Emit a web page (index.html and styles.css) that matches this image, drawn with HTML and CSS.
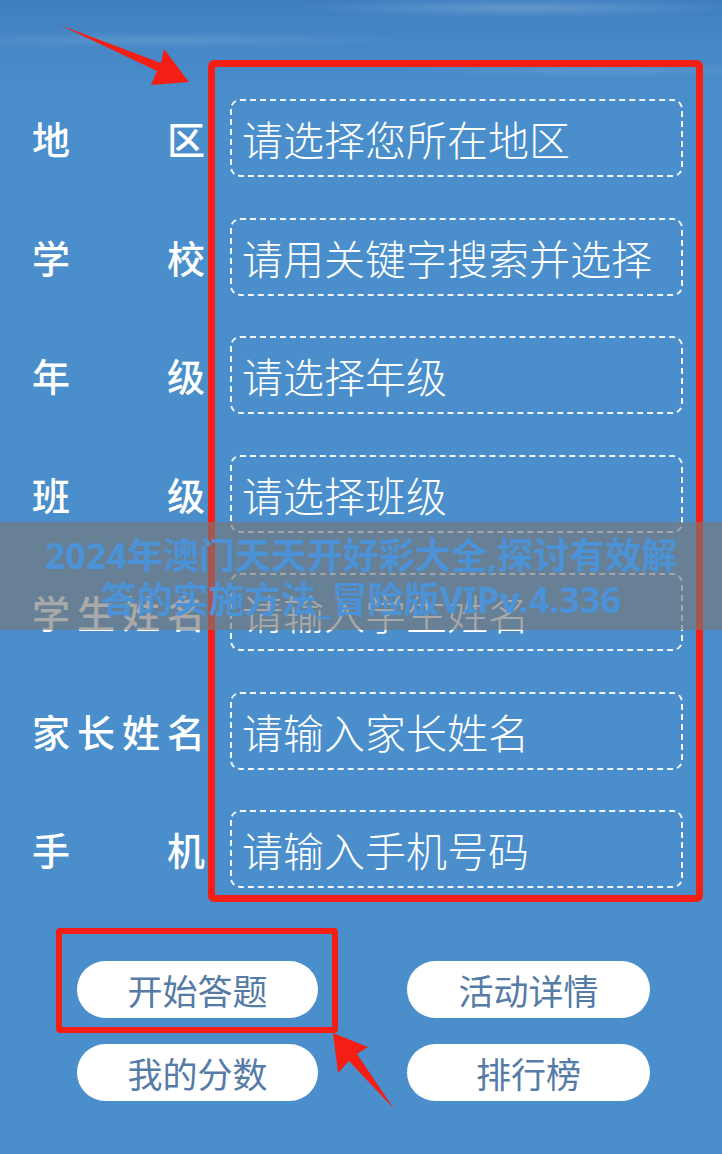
FILE: index.html
```html
<!DOCTYPE html>
<html lang="zh-CN">
  <head>
    <meta charset="UTF-8" />
    <meta name="viewport" content="width=device-width, initial-scale=1.0" />
    <title>报名答题</title>
    <link rel="stylesheet" href="styles.css">
  </head>
  <body>
    <div class="page">
      <div class="form">
        <div class="labels">
          <div class="label">地区</div>
          <div class="label">学校</div>
          <div class="label">年级</div>
          <div class="label">班级</div>
          <div class="label">学生姓名</div>
          <div class="label">家长姓名</div>
          <div class="label">手机</div>
        </div>
        <div class="fields">
          <div class="field">请选择您所在地区</div>
          <div class="field">请用关键字搜索并选择</div>
          <div class="field">请选择年级</div>
          <div class="field">请选择班级</div>
          <div class="field">请输入学生姓名</div>
          <div class="field">请输入家长姓名</div>
          <div class="field">请输入手机号码</div>
        </div>
      </div>

      <div class="actions">
        <a class="btn" href="#">开始答题</a>
        <a class="btn" href="#">活动详情</a>
        <a class="btn" href="#">我的分数</a>
        <a class="btn" href="#">排行榜</a>
        <div class="mark"></div>
      </div>

      <div class="banner">
        2024年澳门天天开好彩大全,探讨有效解<br />答的实施方法_冒险版VIPv.4.336
      </div>

      <!-- red annotation arrows -->
      <svg class="arrows" width="722" height="1154" viewBox="0 0 722 1154">
        <polygon points="60,25 161,63 164,49 189,82 151,85 157,71" fill="#f41e14" />
        <polygon points="333,1033 368,1047 357,1054 394,1109 349,1061 338,1073" fill="#f41e14" />
      </svg>
    </div>
  </body>
</html>
```

FILE: styles.css
```css
:root {
  --blue: #4a8fcb;
  --red: #f41e14;
  --btn-text: #557ba6;
}
body {
  margin: 0;
  padding: 0;
  font-family: "Noto Sans CJK SC", "Noto Sans", sans-serif;
  color: #fff;
  background-color: var(--blue);
  background-image:
    radial-gradient(ellipse 220px 10px at 520px 8px, rgba(255, 255, 255, 0.18), transparent),
    radial-gradient(ellipse 260px 8px at 160px 40px, rgba(255, 255, 255, 0.1), transparent),
    radial-gradient(ellipse 200px 8px at 600px 70px, rgba(255, 255, 255, 0.1), transparent),
    linear-gradient(180deg, #3e7ec0 0, #4687c6 40px, #4a8fcb 110px, #4a8fcb 100%);
  background-repeat: no-repeat;
}
.page {
  position: relative;
  min-height: 1154px;
  padding-top: 60px;
  box-sizing: border-box;
  overflow: hidden;
}
.form {
  display: flex;
  margin-left: 32px;
}
.labels {
  width: 173px;
  padding-top: 39px;
  display: flex;
  flex-direction: column;
  gap: 40.5px;
}
.label {
  height: 78px;
  line-height: 78px;
  font-size: 38px;
  font-weight: 500;
  text-align: justify;
  text-align-last: justify;
}
.fields {
  width: 495px;
  margin-left: 3px;
  box-sizing: border-box;
  border: 7px solid var(--red);
  border-radius: 6px;
  padding: 32px 13px 7px 15px;
  display: flex;
  flex-direction: column;
  gap: 40.5px;
}
.field {
  height: 78px;
  box-sizing: border-box;
  border: 2px dashed rgba(255, 255, 255, 0.92);
  border-radius: 10px;
  padding-left: 10px;
  display: flex;
  align-items: center;
  font-size: 41px;
  font-weight: 300;
  white-space: nowrap;
}
.actions {
  position: relative;
  margin: 59px 0 0 77px;
  display: grid;
  grid-template-columns: 241px 243px;
  column-gap: 89px;
  row-gap: 26px;
  width: max-content;
}
.btn {
  height: 57px;
  border-radius: 29px;
  background-color: #fff;
  color: var(--btn-text);
  text-decoration: none;
  font-size: 35px;
  display: flex;
  align-items: center;
  justify-content: center;
}
.mark {
  position: absolute;
  left: -21px;
  top: -33px;
  width: 282px;
  height: 105px;
  box-sizing: border-box;
  border: 6px solid var(--red);
  border-radius: 4px;
}
.banner {
  position: absolute;
  left: 0;
  right: 0;
  top: 522px;
  height: 108px;
  box-sizing: border-box;
  padding-top: 12px;
  background-color: rgba(120, 120, 120, 0.64);
  color: #4b92d6;
  font-family: "Noto Sans", "Noto Sans CJK SC", sans-serif;
  font-weight: 700;
  font-size: 36px;
  line-height: 44px;
  text-align: center;
  white-space: nowrap;
}
.arrows {
  position: absolute;
  left: 0;
  top: 0;
  pointer-events: none;
}
```
